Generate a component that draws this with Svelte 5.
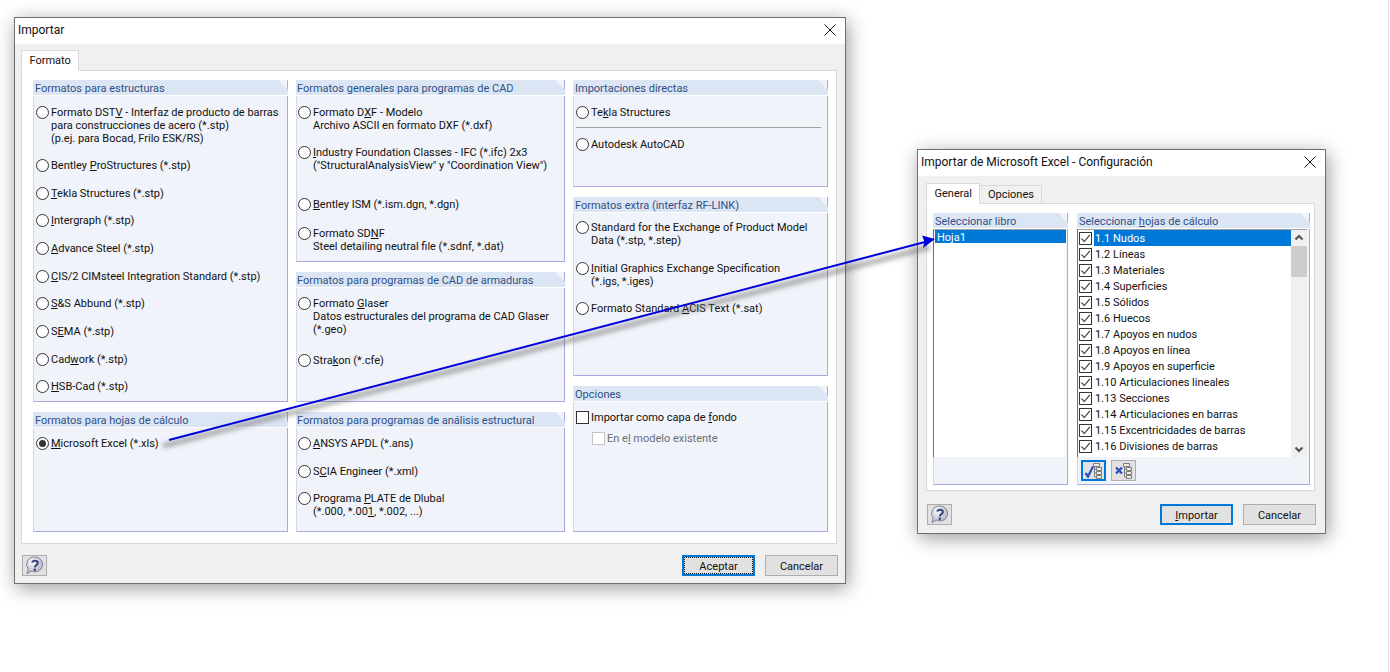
<script>
  const col1 = [
    { gap: 0, lines: [['Formato DST', 'V', ' - Interfaz de producto de barras'], ['para construcciones de acero (*.stp)'], ['(p.ej. para Bocad, Frilo ESK/RS)']] },
    { gap: 14, lines: [['Bentley ', 'P', 'roStructures (*.stp)']] },
    { gap: 15, lines: [['', 'T', 'ekla Structures (*.stp)']] },
    { gap: 14, lines: [['', 'I', 'ntergraph (*.stp)']] },
    { gap: 15, lines: [['', 'A', 'dvance Steel (*.stp)']] },
    { gap: 15, lines: [['', 'C', 'IS/2 CIMsteel Integration Standard (*.stp)']] },
    { gap: 14, lines: [['', 'S', '&S Abbund (*.stp)']] },
    { gap: 15, lines: [['S', 'E', 'MA (*.stp)']] },
    { gap: 15, lines: [['Cad', 'w', 'ork (*.stp)']] },
    { gap: 14, lines: [['', 'H', 'SB-Cad (*.stp)']] }
  ];
  const cad = [
    { gap: 0, lines: [['Formato D', 'X', 'F - Modelo'], ['Archivo ASCII en formato DXF (*.dxf)']] },
    { gap: 14, lines: [['', 'I', 'ndustry Foundation Classes - IFC (*.ifc) 2x3'], ['("StructuralAnalysisView" y "Coordination View")']] },
    { gap: 26, lines: [['', 'B', 'entley ISM (*.ism.dgn, *.dgn)']] },
    { gap: 16, lines: [['Formato SD', 'N', 'F'], ['Steel detailing neutral file (*.sdnf, *.dat)']] }
  ];
  const armaduras = [
    { gap: 0, lines: [['Formato ', 'G', 'laser'], ['Datos estructurales del programa de CAD Glaser'], ['(*.geo)']] },
    { gap: 18, lines: [['Stra', 'k', 'on (*.cfe)']] }
  ];
  const analisis = [
    { gap: 0, lines: [['', 'A', 'NSYS APDL (*.ans)']] },
    { gap: 15, lines: [['S', 'C', 'IA Engineer (*.xml)']] },
    { gap: 14, lines: [['Programa ', 'P', 'LATE de Dlubal'], ['(*.000, *.00', '1', ', *.002, ...)']] }
  ];
  const extra = [
    { gap: 0, lines: [['Standard for the Exchange of Product Model'], ['Data (*.stp, *.step)']] },
    { gap: 15, lines: [['', 'I', 'nitial Graphics Exchange Specification'], ['(*.igs, *.iges)']] },
    { gap: 14, lines: [['Formato Standard ', 'A', 'CIS Text (*.sat)']] }
  ];
  const sheets = [
    '1.1 Nudos', '1.2 Líneas', '1.3 Materiales', '1.4 Superficies', '1.5 Sólidos',
    '1.6 Huecos', '1.7 Apoyos en nudos', '1.8 Apoyos en línea', '1.9 Apoyos en superficie',
    '1.10 Articulaciones lineales', '1.13 Secciones', '1.14 Articulaciones en barras',
    '1.15 Excentricidades de barras', '1.16 Divisiones de barras'
  ];
</script>

{#snippet label(parts)}
  {parts[0]}{#if parts[1]}<u>{parts[1]}</u>{/if}{parts[2] ?? ''}
{/snippet}

{#snippet radios(items)}
  {#each items as item}
    <div class="radio-row" style:margin-top="{item.gap}px">
      <span class="radio"></span>
      <div class="radio-text">
        {#each item.lines as line}
          <div>{@render label(line)}</div>
        {/each}
      </div>
    </div>
  {/each}
{/snippet}

{#snippet close()}
  <svg class="close" width="12" height="12" viewBox="0 0 12 12">
    <path d="M.5.5l11 11M11.5.5l-11 11" stroke="#111" fill="none" />
  </svg>
{/snippet}

{#snippet help()}
  <button class="help">
    <svg width="21" height="19" viewBox="0 0 21 19">
      <defs>
        <radialGradient id="bubble" cx="35%" cy="30%" r="80%">
          <stop offset="0" stop-color="#fbfbfd" />
          <stop offset="1" stop-color="#a9acb8" />
        </radialGradient>
      </defs>
      <path d="M11 1a7.800 7.500 0 1 1-4 14l-4 2.800 1.200-4.800A7.800 7.500 0 0 1 11 1z" fill="url(#bubble)" stroke="#83859a" />
      <path d="M8.300 6.600c.3-2.300 5.700-2.700 5.500.4 0 2-2.700 2-2.900 4.300" fill="none" stroke="#35427f" stroke-width="2.100" />
      <circle cx="10.800" cy="13.800" r="1.300" fill="#35427f" />
    </svg>
  </button>
{/snippet}

{#snippet tree()}
  <path d="M9.500 1.500h6v3h-6zM12.500 5.500h5v3h-5zM12.500 9.500h5v3h-5zM12.500 13.500h5v3h-5zM10.500 4.500v10.500h2M10.500 7h2M10.500 11h2" fill="#ececec" stroke="#7c7c7c" />
{/snippet}

<div class="desktop">
  <section class="dialog main-dialog">
    <header class="title">
      <span>Importar</span>
      {@render close()}
    </header>
    <div class="tabs">
      <div class="tab active">Formato</div>
    </div>
    <div class="tab-panel main-panel">
      <div class="col col-1">
        <div class="group grow">
          <h3>Formatos para estructuras</h3>
          <div class="body">{@render radios(col1)}</div>
        </div>
        <div class="group h120">
          <h3>Formatos para hojas de cálculo</h3>
          <div class="body low">
            <div class="radio-row">
              <span class="radio checked"></span>
              <div class="radio-text"><u>M</u>icrosoft Excel (*.xls)</div>
            </div>
          </div>
        </div>
      </div>

      <div class="col col-2">
        <div class="group h182">
          <h3>Formatos generales para programas de CAD</h3>
          <div class="body">{@render radios(cad)}</div>
        </div>
        <div class="group grow">
          <h3>Formatos para programas de CAD de armaduras</h3>
          <div class="body low">{@render radios(armaduras)}</div>
        </div>
        <div class="group h120">
          <h3>Formatos para programas de análisis estructural</h3>
          <div class="body low">{@render radios(analisis)}</div>
        </div>
      </div>

      <div class="col col-3">
        <div class="group h107">
          <h3>Importaciones directas</h3>
          <div class="body">
            <div class="radio-row">
              <span class="radio"></span>
              <div class="radio-text">Te<u>k</u>la Structures</div>
            </div>
            <hr />
            <div class="radio-row">
              <span class="radio"></span>
              <div class="radio-text">Autodesk AutoCAD</div>
            </div>
          </div>
        </div>
        <div class="group grow">
          <h3>Formatos extra (interfaz RF-LINK)</h3>
          <div class="body lower">{@render radios(extra)}</div>
        </div>
        <div class="group h146">
          <h3>Opciones</h3>
          <div class="body low">
            <div class="check-row">
              <span class="check"></span>
              <span>Importar como capa de <u>f</u>ondo</span>
            </div>
            <div class="check-row disabled">
              <span class="check"></span>
              <span>En e<u>l</u> modelo existente</span>
            </div>
          </div>
        </div>
      </div>
    </div>
    <footer class="actions">
      {@render help()}
      <div class="spacer"></div>
      <button class="btn focused dotted">Aceptar</button>
      <button class="btn">Cancelar</button>
    </footer>
  </section>

  <section class="dialog excel-dialog">
    <header class="title">
      <span>Importar de Microsoft Excel - Configuración</span>
      {@render close()}
    </header>
    <div class="tabs">
      <div class="tab active">General</div>
      <div class="tab">Opciones</div>
    </div>
    <div class="tab-panel excel-panel">
      <div class="group book">
        <h3>Seleccionar libro</h3>
        <div class="list">
          <div class="book-row">Hoja1</div>
        </div>
      </div>
      <div class="group sheets">
        <h3>Seleccionar <u>h</u>ojas de cálculo</h3>
        <div class="list sheet-list">
          <div class="rows">
            {#each sheets as sheet, i}
              <div class="sheet-row">
                <span class="check on">
                  <svg width="11" height="11" viewBox="0 0 11 11">
                    <path d="M1.500 5.500l2.800 3L9.800 2" fill="none" stroke="#555" stroke-width="1.200" />
                  </svg>
                </span>
                <span class="sheet-name" class:selected={i === 0}>{sheet}</span>
              </div>
            {/each}
          </div>
          <div class="scrollbar">
            <svg width="16" height="16" viewBox="0 0 16 16">
              <path d="M4.500 9.500L8 6l3.500 3.500" fill="none" stroke="#505050" stroke-width="2" />
            </svg>
            <div class="thumb"></div>
            <div class="spacer"></div>
            <svg width="16" height="16" viewBox="0 0 16 16">
              <path d="M4.500 6.500L8 10l3.500-3.500" fill="none" stroke="#505050" stroke-width="2" />
            </svg>
          </div>
        </div>
        <div class="sheet-tools">
          <button class="tool focused">
            <svg width="19" height="18" viewBox="0 0 19 18">
              {@render tree()}
              <path d="M1.500 11l2.500 3.500L9 4.500" fill="none" stroke="#2f4ec2" stroke-width="2.200" />
            </svg>
          </button>
          <button class="tool">
            <svg width="19" height="18" viewBox="0 0 19 18">
              {@render tree()}
              <path d="M2 5.500l6 6M8 5.500l-6 6" fill="none" stroke="#2f4ec2" stroke-width="2.400" />
            </svg>
          </button>
        </div>
      </div>
    </div>
    <footer class="actions">
      {@render help()}
      <div class="spacer"></div>
      <button class="btn focused"><u>I</u>mportar</button>
      <button class="btn">Cancelar</button>
    </footer>
  </section>

  <svg class="arrow" width="1390" height="672" viewBox="0 0 1390 672">
    <defs>
      <filter id="soft" x="-5%" y="-50%" width="110%" height="200%">
        <feGaussianBlur stdDeviation="2.500" />
      </filter>
    </defs>
    <path d="M163 446L930 247" stroke="#555" stroke-opacity=".6" stroke-width="4" filter="url(#soft)" />
    <path d="M169 440L925 242" stroke="#0000dc" stroke-width="2" />
    <path d="M935 239L922 235.500l2.500 6.300-1.500 6.200z" fill="#0000dc" />
  </svg>

  <div class="edge"></div>
</div>

<style>
  :global(body) {
    margin: 0;
    background: #fff;
  }

  .desktop {
    position: relative;
    width: 1390px;
    height: 672px;
    overflow: hidden;
    font-family: Roboto, "Noto Sans", sans-serif;
    font-size: 11px;
    color: #111;
    background: #fff;
  }

  .edge {
    position: absolute;
    left: 1388px;
    top: 0;
    bottom: 0;
    width: 1px;
    background: #dedede;
  }

  .dialog {
    position: absolute;
    box-sizing: border-box;
    display: flex;
    flex-direction: column;
    background: #f0f0f0;
    border: 1px solid #6f6f6f;
    box-shadow: 2px 4px 18px rgba(0, 0, 0, 0.4);
  }

  .main-dialog {
    left: 14px;
    top: 17px;
    width: 832px;
    height: 567px;
  }

  .excel-dialog {
    left: 917px;
    top: 149px;
    width: 409px;
    height: 385px;
  }

  .title {
    flex: none;
    box-sizing: border-box;
    height: 26px;
    display: flex;
    align-items: center;
    justify-content: space-between;
    padding: 0 9px 2px 3px;
    background: #fff;
    font-size: 12px;
  }

  .tabs {
    flex: none;
    display: flex;
    align-items: flex-end;
    height: 27px;
    padding-left: 6px;
    margin-bottom: -1px;
  }

  .excel-dialog .tabs {
    height: 28px;
    padding-left: 8px;
  }

  .tab {
    box-sizing: border-box;
    height: 19px;
    padding: 0 7.5px;
    line-height: 18px;
    background: #f0f0f0;
    border: 1px solid #d9d9d9;
    margin-left: -1px;
  }

  .tab:first-child {
    margin-left: 0;
  }

  .tab.active {
    position: relative;
    z-index: 1;
    height: 21px;
    background: #fff;
    border-bottom-color: #fff;
    line-height: 19px;
  }

  .tab-panel {
    box-sizing: border-box;
    flex: 1;
    min-height: 0;
    margin: 0 8px 0 6px;
    background: #fff;
    border: 1px solid #d9d9d9;
  }

  .main-panel {
    display: flex;
    gap: 8px;
    padding: 9px 8px 11px 11px;
  }

  .col {
    display: flex;
    flex-direction: column;
    gap: 10px;
    min-width: 0;
  }

  .col-1 { width: 255px; }
  .col-2 { width: 269px; }
  .col-3 { width: 255px; }

  .col-2 h3 { padding-left: 1px; }
  .col-2 .body { padding-left: 1px; }

  .group {
    box-sizing: border-box;
    display: flex;
    flex-direction: column;
    min-height: 0;
    background: #f0f3f9;
    border-left: 1px solid #d2d6ec;
    border-right: 1px solid #a9a9e2;
    border-bottom: 1px solid #a9a9e2;
  }

  .grow { flex: 1; }
  .h107 { height: 107px; }
  .h120 { height: 120px; }
  .h146 { height: 146px; }
  .h182 { height: 182px; }

  h3 {
    flex: none;
    box-sizing: border-box;
    height: 16px;
    margin: 0 -1px;
    padding: 1px 0 0 2px;
    line-height: 15px;
    font-size: 11px;
    font-weight: 400;
    color: #2e5188;
    background: #dce5f3;
    clip-path: polygon(0 0, calc(100% - 10px) 0, 100% 10px, 100% 100%, 0 100%);
    border-bottom: 1px solid #fff;
  }

  .body {
    padding: 10px 4px 0 2px;
  }

  .body.low { padding-top: 9px; }
  .body.lower { padding-top: 8px; }

  .radio-row {
    display: flex;
    align-items: flex-start;
    gap: 2px;
    line-height: 13px;
  }

  .radio {
    flex: none;
    box-sizing: border-box;
    width: 13px;
    height: 13px;
    border: 1px solid #333;
    border-radius: 50%;
    background: #fff;
    position: relative;
  }

  .radio.checked::after {
    content: "";
    position: absolute;
    inset: 2px;
    border-radius: 50%;
    background: #333;
  }

  .radio-text {
    white-space: nowrap;
  }

  hr {
    margin: 8px 2px 10px 0;
    border: 0;
    border-top: 1px solid #a0a0a0;
  }

  .check-row {
    display: flex;
    align-items: center;
    gap: 2px;
    height: 13px;
  }

  .check-row.disabled {
    margin: 8px 0 0 16px;
    color: #6d6d78;
  }

  .check-row.disabled .check {
    border-color: #c4c4c4;
  }

  .check {
    flex: none;
    box-sizing: border-box;
    width: 13px;
    height: 13px;
    display: flex;
    background: #fff;
    border: 1px solid #333;
  }

  .actions {
    flex: none;
    box-sizing: border-box;
    display: flex;
    align-items: center;
    gap: 10px;
    height: 39px;
    padding: 4px 7px 0;
  }

  .spacer { flex: 1; }

  button {
    box-sizing: border-box;
    margin: 0;
    padding: 0;
    font: inherit;
    color: inherit;
    background: #e1e1e1;
    border: 1px solid #adadad;
    display: flex;
    align-items: center;
    justify-content: center;
  }

  .help {
    width: 25px;
    height: 21px;
  }

  .btn {
    width: 73px;
    height: 21px;
    padding-top: 2px;
  }

  .focused {
    border: 2px solid #0078d7;
  }

  .dotted {
    outline: 1px dotted #111;
    outline-offset: -3px;
  }

  .excel-panel {
    display: flex;
    gap: 9px;
    padding: 9px 4px 5px 6px;
    flex: none;
    height: 288px;
    margin: 0 10px 0 8px;
  }

  .excel-dialog .actions {
    flex: 1;
    height: auto;
    padding: 5px 9px 0;
  }

  .book { width: 135px; }
  .sheets { width: 233px; }

  .list {
    box-sizing: border-box;
    height: 228px;
    flex: none;
    background: #fff;
    border-left: 1px solid #707070;
    border-top: 1px solid #a0a0a0;
    margin-right: 1px;
    margin-left: -1px;
  }

  .book-row {
    height: 13px;
    line-height: 15px;
    margin: 0 0 0 1px;
    padding-left: 2px;
    color: #fff;
    background: #0078d7;
  }

  .sheet-list {
    display: flex;
    margin-right: 2px;
  }

  .rows { flex: 1; min-width: 0; }

  .sheet-row {
    display: flex;
    align-items: center;
    height: 16px;
    padding-left: 1px;
    white-space: nowrap;
  }

  .sheet-row .check { margin-right: 2px; }

  .sheet-name {
    flex: 1;
    height: 16px;
    line-height: 18px;
    padding-left: 1px;
  }

  .sheet-name.selected {
    color: #fff;
    background: #0078d7;
  }

  .scrollbar {
    flex: none;
    width: 16px;
    display: flex;
    flex-direction: column;
    background: #f0f0f0;
  }

  .thumb {
    height: 31px;
    background: #cdcdcd;
  }

  .sheet-tools {
    flex: 1;
    display: flex;
    align-items: center;
    gap: 5px;
    padding-left: 3px;
  }

  .tool {
    width: 25px;
    height: 21px;
  }

  .close { flex: none; }

  .arrow {
    position: absolute;
    left: 0;
    top: 0;
    pointer-events: none;
  }
</style>
